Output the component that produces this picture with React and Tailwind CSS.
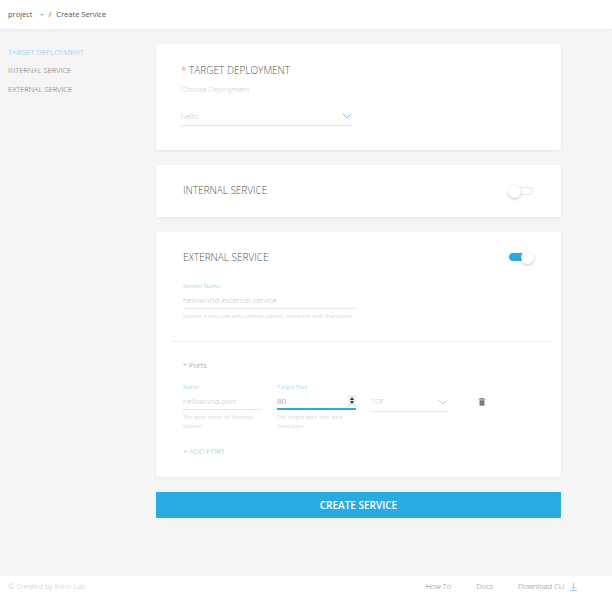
import React from "react";

const sans = "font-['Open_Sans',sans-serif]";

const Chevron = ({ className }) => (
  <svg width="10" height="6" viewBox="0 0 10 6" fill="none" className={className}>
    <path d="M1 1l4 4 4-4" stroke="currentColor" strokeWidth="1" />
  </svg>
);

const Field = ({ label, value, hint, active, stepper, className, hintClass = "" }) => (
  <div className={className}>
    <div className="text-[6px] leading-[9px] text-[#5bbde6] font-light">{label}</div>
    <div className={`flex items-center justify-between h-[16px] mt-[2px] ${active ? "border-b-2 border-b-[#29abe2] text-[#555]" : "border-b border-b-[#e4e4e4] text-[#bbb]"}`}>
      <span className={`${active ? "text-[8px]" : "text-[7.5px]"} font-light tracking-[0.1px] mt-[1px]`}>{value}</span>
      {stepper && (
        <span className="flex flex-col items-center justify-center gap-[1px] w-[8px] h-[12px] bg-[#eeeeee]">
          <span className="w-0 h-0 border-x-[2.5px] border-x-transparent border-b-[3px] border-b-[#333]"></span>
          <span className="w-0 h-0 border-x-[2.5px] border-x-transparent border-t-[3px] border-t-[#333]"></span>
        </span>
      )}
    </div>
    <div className={`mt-[3px] text-[6px] leading-[9.5px] text-[#bdbdbd] font-light ${hintClass}`}>{hint}</div>
  </div>
);

const Toggle = ({ on }) => (
  <div className="relative w-[24px] h-[8px]">
    <div className={`w-[24px] h-[8px] rounded-full ${on ? "bg-[#29abe2]" : "border border-[#e6e6e6] bg-white"}`}></div>
    <div className={`absolute top-[-2.5px] w-[13px] h-[13px] rounded-full bg-white shadow-[0_1px_3px_rgba(0,0,0,0.25)] ${on ? "left-[12px]" : "left-[-1px]"}`}></div>
  </div>
);

const Card = ({ className, children }) => (
  <div className={`bg-white rounded-[2px] shadow-[0_1px_3px_rgba(0,0,0,0.08)] ${className}`}>{children}</div>
);

export default function App() {
  return (
    <div className={`${sans} w-[612px] h-[595px] bg-[#f5f5f5] flex flex-col overflow-hidden`}>
      <header className="h-[29px] shrink-0 bg-white shadow-[0_1px_3px_rgba(0,0,0,0.06)] flex items-center pl-[8px] text-[7.5px] text-[#555] z-10">
        <span>project</span>
        <span className="ml-[7px] w-0 h-0 border-x-[2px] border-x-transparent border-t-[2.5px] border-t-[#6cc5ea]"></span>
        <span className="ml-[5px]">/</span>
        <span className="ml-[5px]">Create Service</span>
      </header>

      <div className="flex flex-1">
        <aside className="w-[156px] shrink-0 pl-[8px] pt-[18px] text-[7.5px] font-light text-[#666]">
          <div className="h-[10px] leading-[10px] text-[#6cc5ea]">TARGET DEPLOYMENT</div>
          <div className="h-[10px] leading-[10px] mt-[8px]">INTERNAL SERVICE</div>
          <div className="h-[10px] leading-[10px] mt-[9px]">EXTERNAL SERVICE</div>
        </aside>

        <main className="w-[405px] pt-[15px] flex flex-col">
          <Card className="h-[106px] pl-[25px] pt-[19px]">
            <div className="text-[10px] leading-[14px] font-light text-[#555]">
              <span className="text-[#f0705a]">*</span> TARGET DEPLOYMENT
            </div>
            <div className="mt-[7px] text-[7.5px] leading-[11px] font-light text-[#c4c4c4]">Choose Deployment</div>
            <div className="mt-[12px] w-[171px] h-[19px] border-b border-[#e4e4e4] flex items-center justify-between text-[8px] font-light text-[#bbb]">
              <span>hello</span>
              <Chevron className="text-[#6cc5ea]" />
            </div>
          </Card>

          <Card className="mt-[15px] h-[52px] pl-[27px] pr-[28px] flex items-center justify-between">
            <span className="text-[10px] font-light text-[#555] mb-[2px]">INTERNAL SERVICE</span>
            <Toggle />
          </Card>

          <Card className="mt-[15px] h-[245px] pt-[18px]">
            <div className="pl-[27px] pr-[28px] flex items-center justify-between h-[14px]">
              <span className="text-[10px] font-light text-[#555]">EXTERNAL SERVICE</span>
              <Toggle on />
            </div>
            <Field
              className="ml-[27px] mt-[18px] w-[172px]"
              label="Service Name"
              value="helloworld-external-service"
              hint="Service name can only contain letters, numbers and characters"
              hintClass="whitespace-nowrap"
            />
            <div className="ml-[16px] mr-[9px] mt-[19px] border-t border-[#f0f0f0]"></div>
            <div className="ml-[27px] mt-[18px] text-[7.5px] leading-[10px] text-[#777] font-light">
              <span className="text-[#f0705a]">*</span> Ports
            </div>
            <div className="ml-[27px] mt-[13px] flex items-start">
              <Field
                className="w-[79px]"
                label="Name"
                value="helloworld-port"
                hint="The port name of External Service"
              />
              <Field
                className="ml-[15px] w-[79px]"
                label="Target Port"
                value="80"
                hint="The target port into your Container"
                active
                stepper
              />
              <div className="ml-[15px] mt-[10px] w-[78px] h-[19px] border-b border-[#e4e4e4] flex items-center justify-between pr-[1px] text-[7.5px] font-light text-[#bbb]">
                <span>TCP</span>
                <Chevron className="text-[#ccc]" />
              </div>
              <svg width="8" height="8" viewBox="0 0 8 8" fill="none" className="ml-[29px] mt-[15px] text-[#555]">
                <path d="M0.5 1.2h7M2.8 1V0.4h2.4V1" stroke="currentColor" strokeWidth="0.7" />
                <path d="M1.6 2.4h4.8v5.1H1.6z" fill="currentColor" />
                <path d="M3 3.2v3.4M5 3.2v3.4" stroke="#fff" strokeWidth="0.5" />
              </svg>
            </div>
            <div className="ml-[27px] mt-[14px] text-[7.5px] leading-[10px] font-light text-[#6cc5ea]">+ ADD PORT</div>
          </Card>

          <button className="mt-[15px] h-[26px] bg-[#29abe2] rounded-[1px] text-white text-[10px] font-semibold">CREATE SERVICE</button>
        </main>
      </div>

      <footer className="h-[19px] shrink-0 bg-white flex items-center pl-[8px] pt-[2px] text-[7.5px] font-light text-[#777]">
        <span className="text-[#c4c4c4]">© Created by Exon Lab</span>
        <span className="ml-[340px]">How To</span>
        <span className="ml-[25px]">Docs</span>
        <span className="ml-[25px]">Download CLI</span>
        <svg width="7" height="8" viewBox="0 0 7 8" fill="none" className="ml-[6px] text-[#6cc5ea]">
          <path d="M3.5 0v5.5M1.8 4l1.7 1.7L5.2 4M0 7.5h7" stroke="currentColor" strokeWidth="0.8" />
        </svg>
      </footer>
    </div>
  );
}
